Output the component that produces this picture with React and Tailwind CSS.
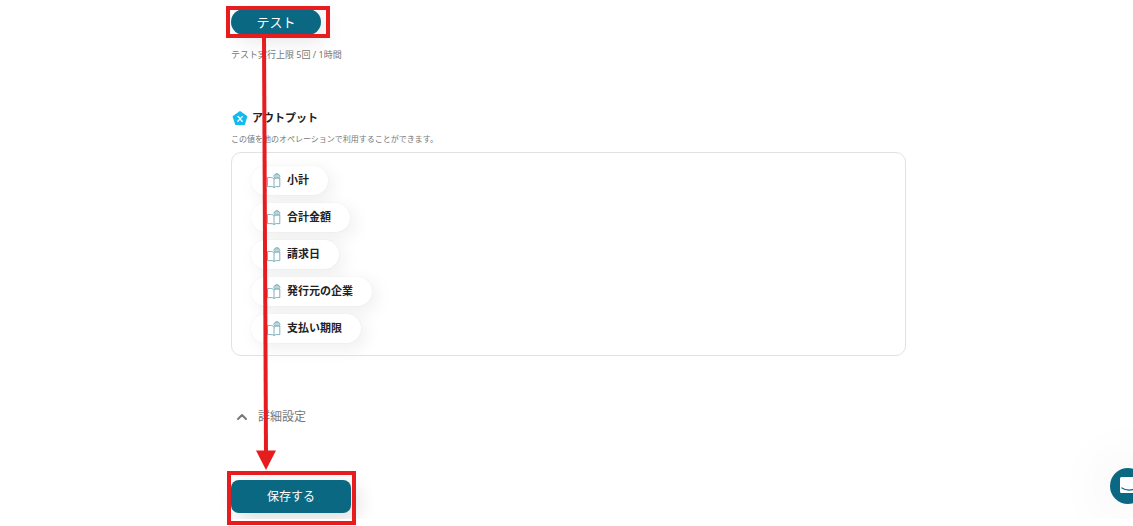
import React from 'react';
import { ChevronUp } from 'lucide-react';

const outputs = ['小計', '合計金額', '請求日', '発行元の企業', '支払い期限'];

const VariableIcon = () => (
  <svg viewBox="0 0 16 16" className="w-4 h-4" aria-hidden="true">
    <path
      d="M8 1.8 14.6 6.6 12.1 14.2H3.9L1.4 6.6Z"
      fill="#12bbee"
      stroke="#12bbee"
      strokeWidth="1.6"
      strokeLinejoin="round"
    />
    <path
      d="M5.8 6.6h.6L9.8 11.2h.6M10.3 6.6 5.8 11.2"
      fill="none"
      stroke="#fff"
      strokeWidth="1.3"
      strokeLinecap="round"
      strokeLinejoin="round"
    />
  </svg>
);

const ReaderIcon = () => (
  <svg
    viewBox="0 0 14 16"
    className="w-[14px] h-4 shrink-0"
    fill="none"
    stroke="#5f9dac"
    strokeWidth="0.8"
    strokeLinejoin="round"
    aria-hidden="true"
  >
    <path d="M.5 4.5h3C5.3 4.5 6.5 5 7 6v8.5c-.7-.7-1.7-.9-3-.9H.5Z" />
    <path d="M7 6.2c.6-.8 1.4-1.2 2.6-1.2h3.2v8.6h-3c-1.2 0-2.1.2-2.8.9" />
    <rect x="6.9" y="1.8" width="6" height="3" rx="1.5" fill="#e3eff2" />
    <path d="M8 1.8C8.3.8 9 .5 9.900.5s1.600.3 1.900 1.300" />
    <path d="M8.500 3.300h.8M10.500 3.300h.8" strokeWidth="1.100" />
  </svg>
);

const ChatIcon = () => (
  <svg viewBox="0 0 24 24" className="w-6 h-6" aria-hidden="true">
    <path
      d="M5.5 3h15A1.5 1.5 0 0 1 22 4.5V22l-4-3H5.5A1.5 1.5 0 0 1 4 17.5V4.5A1.5 1.5 0 0 1 5.5 3Z"
      fill="#fff"
    />
    <path d="M6 14c3.500 2.700 10.500 2.700 14 0" fill="none" stroke="#0b6882" strokeWidth="1.3" strokeLinecap="round" />
  </svg>
);

/* Red guide: test button -> save button */
const Guide = () => (
  <svg
    width="400"
    height="526"
    className="absolute top-0 left-0 pointer-events-none"
    fill="none"
    stroke="#e71c1e"
    strokeWidth="4"
    aria-hidden="true"
  >
    <rect x="228" y="8" width="100" height="28" />
    <path d="M264 36 266 453" />
    <path d="M256 450.5h20L266 470Z" fill="#e71c1e" stroke="none" />
    <rect x="229" y="473" width="125" height="50" />
  </svg>
);

const App = () => {
  return (
    <div className="relative bg-white pb-[7px] font-['Noto_Sans','Noto_Sans_CJK_JP',sans-serif]">
      <main className="relative overflow-hidden pt-[9px] pb-[6px] pl-[231px] pr-[227px]">
        {/* Test run */}
        <button
          type="button"
          className="flex items-center justify-center w-[90px] h-[26px] rounded-full bg-[#0b6882] text-white text-[13px] leading-5 shadow-[6px_6px_20px_rgba(0,0,0,0.1)]"
        >
          テスト
        </button>
        <p className="mt-3 text-[9px] leading-4 text-[#777777]">テスト実行上限 5回 / 1時間</p>

        {/* Outputs */}
        <section className="mt-[45px]">
          <div className="flex items-center gap-1 h-5 pl-px">
            <VariableIcon />
            <h2 className="text-[11px] leading-5 font-bold text-[#222222]">アウトプット</h2>
          </div>
          <p className="mt-1 text-[8px] leading-[14px] text-[#777777]">
            この値を他のオペレーションで利用することができます。
          </p>
          <ul className="mt-[6px] flex flex-col items-start gap-2 rounded-[10px] border border-[#e2e2e2] pt-[13px] pb-3 px-[19px]">
            {outputs.map((name) => (
              <li
                key={name}
                className="flex items-center gap-[6px] h-[29px] pl-4 pr-[19px] rounded-full bg-white text-[11px] font-bold text-[#222222] shadow-[0_0_2px_rgba(0,0,0,0.06),5px_5px_18px_rgba(0,0,0,0.07)]"
              >
                <ReaderIcon />
                <span className="pb-0.5 leading-4">{name}</span>
              </li>
            ))}
          </ul>
        </section>

        {/* Advanced settings */}
        <button type="button" className="mt-[51px] flex items-center gap-2 h-5 pl-[3px] text-xs leading-5 text-[#777777]">
          <ChevronUp className="w-4 h-4" strokeWidth={3} />
          詳細設定
        </button>

        <button
          type="button"
          className="mt-[53px] flex items-center justify-center w-[120px] h-[33px] rounded-lg bg-[#0b6882] text-white text-xs leading-5 shadow-[6px_6px_20px_rgba(0,0,0,0.14)]"
        >
          保存する
        </button>

        {/* Chat launcher */}
        <button
          type="button"
          aria-label="チャット"
          className="absolute -right-[13px] bottom-[15px] flex items-center justify-center w-9 h-9 rounded-full bg-[#0b6882] shadow-[0_0_60px_rgba(0,0,0,0.12)]"
        >
          <ChatIcon />
        </button>
      </main>

      <Guide />
    </div>
  );
};

export default App;
